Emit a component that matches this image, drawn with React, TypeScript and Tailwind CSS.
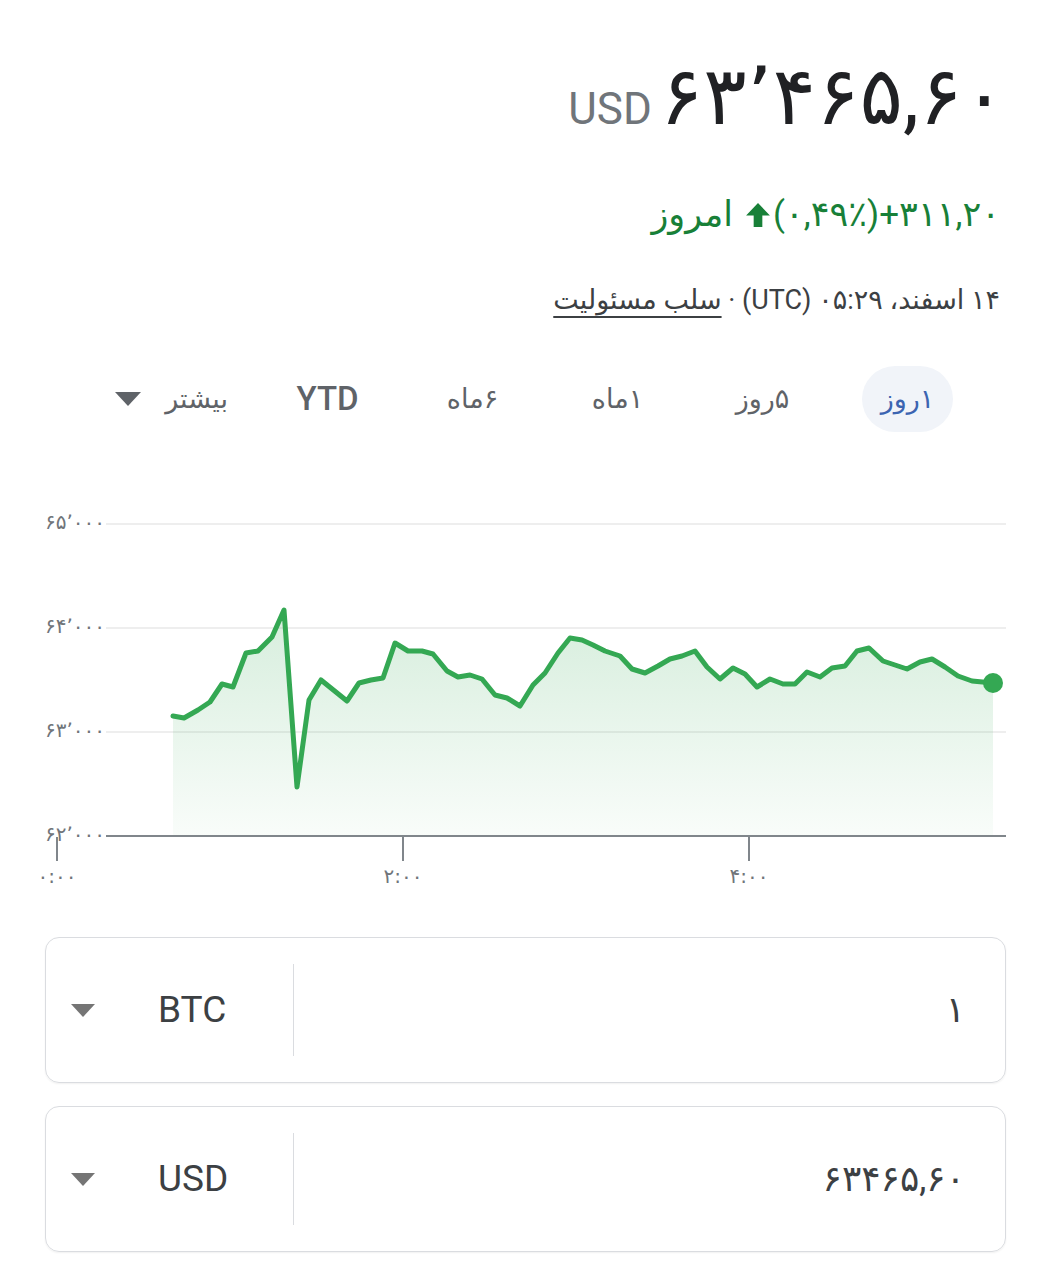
const points: [number, number][] = [
  [173, 716], [184, 718], [198, 710], [210, 702], [222, 684], [233, 687],
  [246, 653], [258, 651], [272, 637], [284, 610], [297, 787], [309, 700],
  [321, 680], [347, 701], [359, 683], [371, 680], [383, 678], [395, 643],
  [408, 651], [422, 651], [433, 654], [447, 671], [458, 677], [470, 675],
  [482, 679], [495, 695], [507, 698], [520, 706], [533, 685], [545, 673],
  [558, 653], [570, 638], [582, 640], [593, 645], [605, 651], [620, 656],
  [632, 669], [645, 673], [658, 666], [670, 659], [682, 656], [695, 651],
  [707, 667], [720, 679], [733, 668], [745, 674], [757, 687], [770, 679],
  [783, 684], [795, 684], [807, 672], [820, 677], [832, 668], [845, 666],
  [857, 651], [869, 648], [883, 661], [895, 665], [907, 669], [920, 662],
  [932, 659], [945, 667], [958, 676], [972, 681], [993, 683],
]

const gridLines = [
  { y: 524, label: '۶۵٬۰۰۰' },
  { y: 628, label: '۶۴٬۰۰۰' },
  { y: 732, label: '۶۳٬۰۰۰' },
]

const ticks = [
  { x: 57, label: '۰:۰۰' },
  { x: 403, label: '۲:۰۰' },
  { x: 749, label: '۴:۰۰' },
]

const tabs = ['۱روز', '۵روز', '۱ماه', '۶ماه']

function DropTriangle({ className = '' }: { className?: string }) {
  return (
    <svg viewBox="0 0 26 14" className={className}>
      <polygon points="0,0 26,0 13,14" fill="currentColor" />
    </svg>
  )
}

// filled material-style up arrow
function UpArrow() {
  return (
    <svg viewBox="0 0 24 24" className="ml-[12px] mr-[2px] h-[26px] w-[26px]">
      <path d="M12 1 L23 12.5 H16 V23 H8 V12.5 H1 Z" fill="currentColor" />
    </svg>
  )
}

function PriceChart() {
  const line = points.map(([x, y], i) => `${i ? 'L' : 'M'}${x},${y}`).join(' ')
  const area = `M173,836 ${points.map(([x, y]) => `L${x},${y}`).join(' ')} L993,836 Z`

  return (
    <svg
      viewBox="45 500 961 400"
      className="block w-[961px] h-[400px] overflow-visible font-['DejaVu_Sans',sans-serif]"
    >
      <defs>
        <linearGradient id="fillGreen" x1="0" y1="0" x2="0" y2="1">
          <stop offset="0%" stopColor="#34a853" stopOpacity="0.2" />
          <stop offset="100%" stopColor="#34a853" stopOpacity="0.03" />
        </linearGradient>
      </defs>

      {gridLines.map(g => (
        <g key={g.y}>
          <line x1="106" x2="1006" y1={g.y} y2={g.y} stroke="#eeeeee" strokeWidth="2" />
          <text x="45" y={g.y + 5} fontSize="20" fill="#70757a">
            {g.label}
          </text>
        </g>
      ))}

      <path d={area} fill="url(#fillGreen)" />

      <line x1="106" x2="1006" y1="836" y2="836" stroke="#80868b" strokeWidth="2" />
      <text x="45" y="841" fontSize="20" fill="#70757a">
        ۶۲٬۰۰۰
      </text>

      {ticks.map(t => (
        <g key={t.x}>
          <line x1={t.x} x2={t.x} y1="837" y2="861" stroke="#80868b" strokeWidth="2" />
          <text x={t.x} y="883" fontSize="20" fill="#70757a" textAnchor="middle">
            {t.label}
          </text>
        </g>
      ))}

      <path
        d={line}
        fill="none"
        stroke="#34a853"
        strokeWidth="5"
        strokeLinejoin="round"
        strokeLinecap="round"
      />
      <circle cx="993" cy="683" r="10" fill="#34a853" />
    </svg>
  )
}

function ConverterRow({ code, value }: { code: string; value: string }) {
  return (
    <div className="flex h-[146px] items-center rounded-[14px] border-[1.5px] border-[#dadce0] shadow-[0_1px_2px_rgba(0,0,0,0.06)]">
      <div className="flex w-[247px] items-center">
        <DropTriangle className="ml-[25px] w-[24px] h-[13px] text-[#757575]" />
        <span className="ml-[63px] text-[37px] text-[#3c4043]">{code}</span>
      </div>
      <div className="h-[92px] w-px bg-[#dadce0]" />
      <div className="flex-1 pr-[40px] text-right text-[36px] text-[#3c4043]" dir="ltr">
        {value}
      </div>
    </div>
  )
}

export default function App() {
  return (
    <div className="min-h-[1280px] bg-white px-[45px] font-['Roboto','DejaVu_Sans',sans-serif]">
      {/* price */}
      <div className="flex h-[140px] items-baseline justify-end gap-[8px] pt-[56px] leading-none">
        <span className="text-[44px] text-[#70757a]">USD</span>
        <span className="text-[81px] text-[#202124]" dir="ltr">
          ۶۳٬۴۶۵,۶۰
        </span>
      </div>

      {/* change today */}
      <div className="mt-[50px] flex h-[50px] items-center justify-end pr-[6px] text-[35px] text-[#188038]">
        <span dir="rtl">امروز</span>
        <UpArrow />
        <span dir="ltr">(۰,۴۹٪)+۳۱۱,۲۰</span>
      </div>

      {/* timestamp */}
      <p
        dir="rtl"
        className="mt-[40px] h-[40px] pr-[6px] text-[27px] leading-[40px] text-[#3c4043]"
      >
        ۱۴ اسفند، ۰۵:۲۹ (UTC) · <span className="underline underline-offset-[7px]">سلب مسئولیت</span>
      </p>

      {/* range tabs */}
      <div dir="rtl" className="mt-[46px] flex h-[66px] items-center gap-[54px] pr-[53px]">
        {tabs.map((t, i) => (
          <div
            key={t}
            className={`flex h-[66px] w-[91px] items-center justify-center rounded-full text-[27px] ${
              i === 0 ? 'bg-[#f1f4f9] text-[#3c64b1]' : 'text-[#5f6368]'
            }`}
          >
            {t}
          </div>
        ))}
        <div className="flex h-[66px] w-[91px] items-center justify-center text-[33px] font-medium text-[#5f6368]">
          YTD
        </div>
        <div className="flex items-center gap-[24px] text-[27px] text-[#5f6368]">
          <span>بیشتر</span>
          <DropTriangle className="w-[26px] h-[14px] text-[#5f6368]" />
        </div>
      </div>

      {/* chart */}
      <div className="mt-[68px]">
        <PriceChart />
      </div>

      {/* converter */}
      <div className="mt-[37px] flex flex-col gap-[23px]">
        <ConverterRow code="BTC" value="۱" />
        <ConverterRow code="USD" value="۶۳۴۶۵,۶۰" />
      </div>
    </div>
  )
}
